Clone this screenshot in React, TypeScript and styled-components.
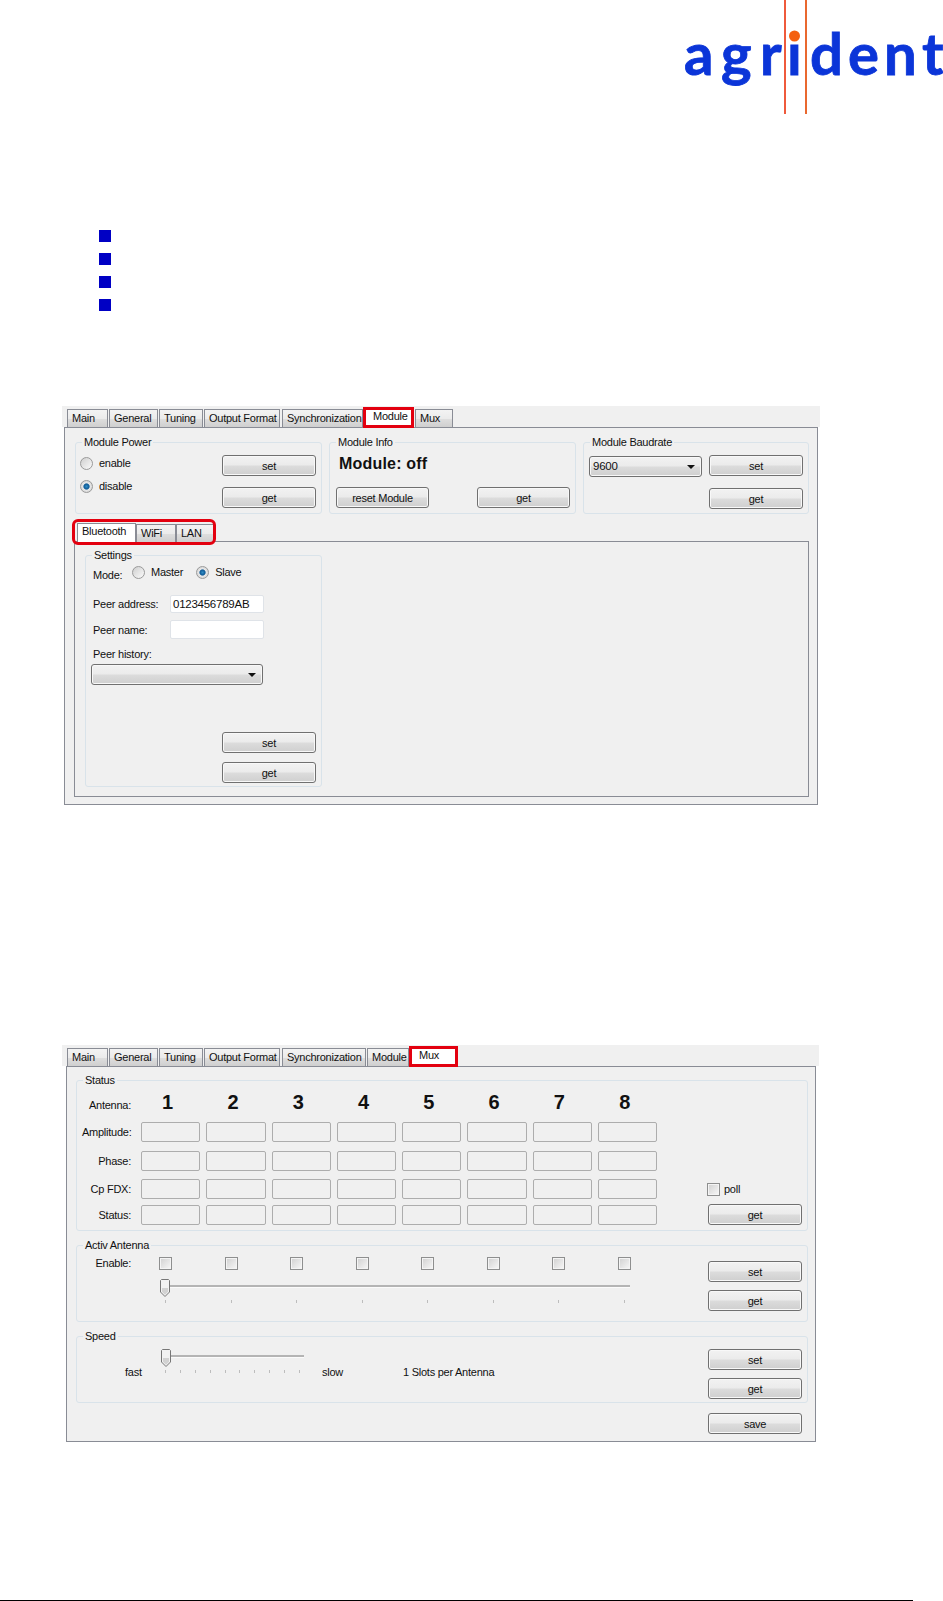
import React from 'react';
import styled, { createGlobalStyle } from 'styled-components';

const GlobalStyle = createGlobalStyle`
  html, body {
    margin: 0;
    padding: 0;
    background: #fff;
    overflow: hidden;
  }
  body {
    font-family: "Liberation Sans", Arial, sans-serif;
    font-size: 11px;
    letter-spacing: -0.25px;
    color: #111;
  }
`;

const Page = styled.div`
  width: 943px;
  height: 1601px;
  display: flex;
  flex-direction: column;
  overflow: hidden;
`;

const LogoSvg = styled.svg`
  display: block;
  flex: none;
`;

const LogoLetter = styled.text`
  font-family: Lato, sans-serif;
  font-weight: 700;
  font-size: 58px;
  letter-spacing: 0;
  fill: #0b35d8;
  stroke: #0b35d8;
  stroke-width: 0.8px;
`;

const BulletList = styled.div`
  margin: 116px 0 0 99px;
  display: flex;
  flex-direction: column;
  gap: 11px;
`;

const Bullet = styled.div`
  width: 12px;
  height: 12px;
  background: #0000c4;
`;

const Window = styled.div<{ $top: number; $width: number }>`
  margin: ${(p) => p.$top}px 0 0 62px;
  width: ${(p) => p.$width}px;
  flex: none;
  display: flex;
  flex-direction: column;
  align-items: flex-start;
`;

const TabStrip = styled.div`
  align-self: stretch;
  height: 21px;
  background: #f0f0f0;
  padding-left: 5px;
  display: flex;
  align-items: flex-end;
  position: relative;
  z-index: 1;
`;

const Tab = styled.div<{ $w: number; $on?: boolean; $marked?: boolean; $gap?: number }>`
  box-sizing: border-box;
  width: ${(p) => p.$w}px;
  margin-left: ${(p) => p.$gap ?? 1}px;
  height: ${(p) => (p.$on ? 21 : 18)}px;
  margin-bottom: ${(p) => (p.$on ? -1 : 0)}px;
  padding: ${(p) => (p.$on ? '1px 0 0 4px' : '2px 0 0 4px')};
  line-height: 13px;
  white-space: nowrap;
  border: 1px solid #898c95;
  border-bottom: none;
  background: linear-gradient(#f3f3f3 0%, #ebebeb 50%, #dddddd 55%, #cfcfcf 100%);
  ${(p) => p.$on && 'background: #fff;'}
  ${(p) => p.$marked && 'border: 3px solid #e3000f; padding: 0 0 0 7px;'}
`;

const TabPanel = styled.div<{ $left: number; $width: number; $height: number }>`
  box-sizing: border-box;
  margin-left: ${(p) => p.$left}px;
  width: ${(p) => p.$width}px;
  height: ${(p) => p.$height}px;
  border: 1px solid #898c95;
  background: #f0f0f0;
  display: flex;
  flex-direction: column;
`;

const WindowFoot = styled.div`
  align-self: stretch;
  height: 2px;
`;

const Group = styled.div<{ $w?: number; $h: number }>`
  box-sizing: border-box;
  position: relative;
  flex: none;
  width: ${(p) => (p.$w ? `${p.$w}px` : 'auto')};
  height: ${(p) => p.$h}px;
  border: 1px solid #d9e3ea;
  border-radius: 3px;
`;

const Legend = styled.span`
  position: absolute;
  left: 6px;
  top: -7px;
  padding: 0 2px;
  background: #f0f0f0;
  line-height: 13px;
  white-space: nowrap;
`;

const Button = styled.div<{ $w?: number }>`
  box-sizing: border-box;
  width: ${(p) => p.$w ?? 94}px;
  height: 21px;
  flex: none;
  border: 1px solid #707070;
  border-radius: 3px;
  background: linear-gradient(#f2f2f2 0%, #ebebeb 48%, #dcdcdc 52%, #cfcfcf 100%);
  box-shadow: inset 0 0 0 1px #f8f8f8;
  text-align: center;
  line-height: 21px;
`;

const Combo = styled(Button)`
  position: relative;
  text-align: left;
  padding-left: 3px;
  line-height: 19px;
  font-size: 11.5px;
  &::after {
    content: '';
    position: absolute;
    right: 6px;
    top: 8px;
    border-left: 4px solid transparent;
    border-right: 4px solid transparent;
    border-top: 4px solid #111;
  }
`;

const RadioDot = styled.span<{ $on?: boolean }>`
  box-sizing: border-box;
  display: block;
  flex: none;
  width: 13px;
  height: 13px;
  border-radius: 50%;
  border: 1px solid #9a9a9a;
  background: ${(p) =>
    p.$on
      ? 'radial-gradient(circle at 50% 50%, #2f8cc4 0, #0f5a96 2.6px, #e8e8e8 3.6px, #c8c8c8 100%)'
      : 'linear-gradient(135deg, #cfcfcf, #fbfbfb)'};
`;

const Radio = styled.label<{ $gap?: number }>`
  display: flex;
  align-items: center;
  gap: ${(p) => p.$gap ?? 6}px;
  line-height: 13px;
`;

const Check = styled.span`
  box-sizing: border-box;
  display: block;
  flex: none;
  width: 13px;
  height: 13px;
  border: 1px solid #8e8f8f;
  box-shadow: inset 0 0 0 1px #f4f4f4;
  background: linear-gradient(135deg, #d0d0d0, #f8f8f8);
`;

/* first window */

const TopRow = styled.div`
  display: flex;
  gap: 7px;
  margin: 14px 0 0 10px;
`;

const PowerBody = styled.div`
  display: flex;
  justify-content: space-between;
  padding: 12px 5px 0 4px;
`;

const ButtonColumn = styled.div<{ $gap?: number }>`
  display: flex;
  flex-direction: column;
  gap: ${(p) => p.$gap ?? 11}px;
`;

const RadioColumn = styled.div`
  display: flex;
  flex-direction: column;
  gap: 10px;
  padding-top: 2px;
`;

const InfoBody = styled.div`
  display: flex;
  flex-direction: column;
  padding: 12px 5px 0 6px;
`;

const ModuleState = styled.div`
  font-size: 16px;
  font-weight: 700;
  letter-spacing: 0.2px;
  line-height: 18px;
  height: 32px;
  padding-left: 3px;
`;

const InfoButtons = styled.div`
  display: flex;
  justify-content: space-between;
`;

const BaudBody = styled.div`
  display: grid;
  grid-template-columns: 113px 94px;
  justify-content: space-between;
  row-gap: 11px;
  padding: 12px 5px 0 5px;
`;

const BaudCombo = styled(Combo)`
  margin-top: 1px;
`;

const BaudGet = styled(Button)`
  grid-column: 2;
`;

const InnerStrip = styled.div`
  position: relative;
  display: flex;
  align-items: flex-end;
  margin: 9px 0 0 9px;
  padding-left: 3px;
  height: 19px;
  z-index: 1;
`;

const InnerTab = styled(Tab)`
  height: ${(p) => (p.$on ? 20 : 18)}px;
`;

const RedOutline = styled.div`
  position: absolute;
  left: -2px;
  top: -4px;
  width: 144px;
  height: 26px;
  box-sizing: border-box;
  border: 3px solid #e3000f;
  border-radius: 6px;
  pointer-events: none;
`;

const InnerPanel = styled.div`
  box-sizing: border-box;
  margin: -1px 0 0 9px;
  width: 735px;
  height: 256px;
  border: 1px solid #898c95;
  padding: 13px 0 0 10px;
`;

const SettingsBody = styled.div`
  display: flex;
  flex-direction: column;
  padding: 10px 5px 0 5px;
  height: 100%;
  box-sizing: border-box;
`;

const ModeRow = styled.div`
  display: flex;
  align-items: flex-start;
  padding-left: 2px;
  height: 29px;
  line-height: 13px;
`;

const ModeLabel = styled.span`
  margin-top: 3px;
  width: 39px;
`;

const SlaveRadio = styled(Radio)`
  margin-left: 13px;
`;

const FieldRow = styled.div`
  display: grid;
  grid-template-columns: 77px 94px;
  align-items: center;
  padding-left: 2px;
  margin-bottom: 7px;
`;

const TextInput = styled.div<{ $h: number }>`
  box-sizing: border-box;
  height: ${(p) => p.$h}px;
  border: 1px solid #dfe3e8;
  border-radius: 2px;
  background: #fff;
  padding-left: 2px;
  font-size: 11.5px;
  line-height: 16px;
`;

const PeerHistory = styled.div`
  padding-left: 2px;
  line-height: 13px;
  margin: 2px 0 3px;
`;

const SettingsButtons = styled(ButtonColumn)`
  margin: 47px 0 0 auto;
`;

/* second window */

const MuxGroups = styled.div`
  display: flex;
  flex-direction: column;
  gap: 14px;
  padding: 13px 7px 0 9px;
`;

const StatusBody = styled.div`
  display: flex;
  justify-content: space-between;
  padding: 12px 5px 0 5px;
`;

const AntennaGrid = styled.div`
  display: grid;
  grid-template-columns: 53px repeat(8, 59.3px);
  grid-template-rows: 29px 29px 28px 26px 20px;
  column-gap: 6px;
`;

const RowLabel = styled.div`
  padding-right: 4px;
  height: 20px;
  line-height: 20px;
  text-align: right;
`;

const AntennaLabel = styled(RowLabel)`
  line-height: 25px;
`;

const AntennaNumber = styled.div`
  font-size: 20px;
  font-weight: 700;
  letter-spacing: 0;
  line-height: 18px;
  padding-right: 6px;
  text-align: center;
`;

const ValueBox = styled.div`
  box-sizing: border-box;
  height: 20px;
  border: 1px solid #adadad;
  border-radius: 2px;
`;

const StatusActions = styled.div`
  display: flex;
  flex-direction: column;
  align-items: flex-start;
  justify-content: flex-end;
  gap: 8px;
`;

const PollRow = styled.label`
  display: flex;
  align-items: center;
  gap: 4px;
  margin-left: -1px;
  line-height: 13px;
`;

const ActivBody = styled.div`
  display: flex;
  justify-content: space-between;
  padding: 11px 5px 0 5px;
`;

const ActivGrid = styled.div`
  display: grid;
  grid-template-columns: 49px 472px;
  column-gap: 28px;
  align-items: start;
  align-content: start;
`;

const EvenRow = styled.div`
  display: flex;
  justify-content: space-between;
`;

const EnableLabel = styled(RowLabel)`
  padding-right: 0;
  height: 13px;
  line-height: 13px;
`;

const ActivButtons = styled(ButtonColumn)`
  margin-top: 4px;
  gap: 8px;
`;

const SliderBox = styled.div<{ $w: number; $ml: number }>`
  position: relative;
  width: ${(p) => p.$w}px;
  margin-left: ${(p) => p.$ml}px;
  height: 18px;
`;

const SliderRail = styled.div`
  position: absolute;
  left: 4px;
  right: 0;
  top: 6px;
  height: 2px;
  background: #b4b4b4;
  border-bottom: 1px solid #fbfbfb;
`;

const SliderThumb = styled.svg`
  position: absolute;
  left: 0;
  top: 0;
`;

const TickRow = styled.div<{ $pad: number }>`
  display: flex;
  justify-content: space-between;
  padding: 0 ${(p) => p.$pad}px;
`;

const Tick = styled.span`
  width: 1px;
  height: 3px;
  background: #bdbdbd;
`;

const ActivSlider = styled.div`
  grid-column: 2;
  padding-top: 9px;
`;

const ActivTicks = styled(TickRow)`
  margin-top: 3px;
`;

const SpeedBody = styled.div`
  display: flex;
  justify-content: space-between;
  padding: 12px 5px 0 48px;
`;

const SpeedControls = styled.div`
  display: flex;
  align-items: flex-start;
`;

const SpeedText = styled.span<{ $ml?: number; $w?: number }>`
  margin-left: ${(p) => p.$ml ?? 0}px;
  width: ${(p) => (p.$w ? `${p.$w}px` : 'auto')};
  margin-top: 17px;
  line-height: 13px;
  white-space: nowrap;
`;

const SpeedTicks = styled(TickRow)`
  margin-top: 3px;
`;

const SpeedSlider = styled.div`
  width: 143px;
`;

const SpeedButtons = styled(ButtonColumn)`
  gap: 8px;
`;

const SaveRow = styled.div`
  display: flex;
  justify-content: flex-end;
  margin-top: -4px;
  padding-right: 6px;
`;

const BottomRule = styled.div`
  margin-top: auto;
  width: 913px;
  height: 1px;
  background: #000;
  flex: none;
`;

const Thumb = () => (
  <SliderThumb width="10" height="18" viewBox="0 0 10 18">
    <path d="M1.5 .5h7l1 1v11.5l-4.5 4.5-4.5-4.5V1.5z" fill="#f2f2f2" stroke="#777" />
    <path d="M2 9h6v3.8l-3 3-3-3z" fill="#d2d2d2" />
  </SliderThumb>
);

const Logo = () => (
  <LogoSvg width="943" height="114" viewBox="0 0 943 114">
    <LogoLetter x="684" y="75">a</LogoLetter>
    <LogoLetter x="721" y="75">g</LogoLetter>
    <LogoLetter x="760" y="75">r</LogoLetter>
    <LogoLetter x="787" y="75">ı</LogoLetter>
    <LogoLetter x="810" y="75">d</LogoLetter>
    <LogoLetter x="848" y="75">e</LogoLetter>
    <LogoLetter x="884" y="75">n</LogoLetter>
    <LogoLetter x="922" y="75">t</LogoLetter>
    <rect x="784" y="0" width="2" height="114" fill="#ef5a3c" />
    <rect x="805" y="0" width="2" height="114" fill="#e9682f" />
    <circle cx="794.5" cy="36" r="5.5" fill="#f4600f" />
  </LogoSvg>
);

const tabsFirst = [
  { name: 'Main', w: 41, gap: 0 },
  { name: 'General', w: 49 },
  { name: 'Tuning', w: 44 },
  { name: 'Output Format', w: 76 },
  { name: 'Synchronization', w: 81, gap: 2 },
  { name: 'Module', w: 51, on: true, marked: true, gap: 0 },
  { name: 'Mux', w: 38, gap: 1 },
];

const tabsSecond = [
  { name: 'Main', w: 41, gap: 0 },
  { name: 'General', w: 49 },
  { name: 'Tuning', w: 44 },
  { name: 'Output Format', w: 76 },
  { name: 'Synchronization', w: 84, gap: 2 },
  { name: 'Module', w: 42 },
  { name: 'Mux', w: 49, on: true, marked: true, gap: 0 },
];

const antennas = [1, 2, 3, 4, 5, 6, 7, 8];
const rows = ['Amplitude:', 'Phase:', 'Cp FDX:', 'Status:'];

const Tabs = ({ items }: { items: typeof tabsSecond }) => (
  <TabStrip>
    {items.map((t) => (
      <Tab key={t.name} $w={t.w} $gap={t.gap} $on={t.on} $marked={t.marked}>
        {t.name}
      </Tab>
    ))}
  </TabStrip>
);

export default function App() {
  return (
    <Page>
      <GlobalStyle />
      <Logo />
      <BulletList>
        <Bullet />
        <Bullet />
        <Bullet />
        <Bullet />
      </BulletList>

      <Window $top={95} $width={758}>
        <Tabs items={tabsFirst} />
        <TabPanel $left={2} $width={754} $height={378}>
          <TopRow>
            <Group $w={247} $h={72}>
              <Legend>Module Power</Legend>
              <PowerBody>
                <RadioColumn>
                  <Radio>
                    <RadioDot />
                    enable
                  </Radio>
                  <Radio>
                    <RadioDot $on />
                    disable
                  </Radio>
                </RadioColumn>
                <ButtonColumn>
                  <Button>set</Button>
                  <Button>get</Button>
                </ButtonColumn>
              </PowerBody>
            </Group>
            <Group $w={247} $h={72}>
              <Legend>Module Info</Legend>
              <InfoBody>
                <ModuleState>Module: off</ModuleState>
                <InfoButtons>
                  <Button $w={93}>reset Module</Button>
                  <Button $w={93}>get</Button>
                </InfoButtons>
              </InfoBody>
            </Group>
            <Group $w={226} $h={72}>
              <Legend>Module Baudrate</Legend>
              <BaudBody>
                <BaudCombo $w={113}>9600</BaudCombo>
                <Button>set</Button>
                <BaudGet>get</BaudGet>
              </BaudBody>
            </Group>
          </TopRow>

          <InnerStrip>
            <InnerTab $w={59} $gap={0} $on>
              Bluetooth
            </InnerTab>
            <InnerTab $w={40} $gap={0}>
              WiFi
            </InnerTab>
            <InnerTab $w={39} $gap={0}>
              LAN
            </InnerTab>
            <RedOutline />
          </InnerStrip>
          <InnerPanel>
            <Group $w={237} $h={232}>
              <Legend>Settings</Legend>
              <SettingsBody>
                <ModeRow>
                  <ModeLabel>Mode:</ModeLabel>
                  <Radio>
                    <RadioDot />
                    Master
                  </Radio>
                  <SlaveRadio>
                    <RadioDot $on />
                    Slave
                  </SlaveRadio>
                </ModeRow>
                <FieldRow>
                  <span>Peer address:</span>
                  <TextInput $h={18}>0123456789AB</TextInput>
                </FieldRow>
                <FieldRow>
                  <span>Peer name:</span>
                  <TextInput $h={19} />
                </FieldRow>
                <PeerHistory>Peer history:</PeerHistory>
                <Combo $w={172} />
                <SettingsButtons $gap={9}>
                  <Button>set</Button>
                  <Button>get</Button>
                </SettingsButtons>
              </SettingsBody>
            </Group>
          </InnerPanel>
        </TabPanel>
        <WindowFoot />
      </Window>

      <Window $top={238} $width={757}>
        <Tabs items={tabsSecond} />
        <TabPanel $left={4} $width={750} $height={376}>
          <MuxGroups>
            <Group $h={151}>
              <Legend>Status</Legend>
              <StatusBody>
                <AntennaGrid>
                  <AntennaLabel>Antenna:</AntennaLabel>
                  {antennas.map((n) => (
                    <AntennaNumber key={n}>{n}</AntennaNumber>
                  ))}
                  {rows.map((label) => (
                    <React.Fragment key={label}>
                      <RowLabel>{label}</RowLabel>
                      {antennas.map((n) => (
                        <ValueBox key={n} />
                      ))}
                    </React.Fragment>
                  ))}
                </AntennaGrid>
                <StatusActions>
                  <PollRow>
                    <Check />
                    poll
                  </PollRow>
                  <Button>get</Button>
                </StatusActions>
              </StatusBody>
            </Group>

            <Group $h={77}>
              <Legend>Activ Antenna</Legend>
              <ActivBody>
                <ActivGrid>
                  <EnableLabel>Enable:</EnableLabel>
                  <EvenRow>
                    {antennas.map((n) => (
                      <Check key={n} />
                    ))}
                  </EvenRow>
                  <ActivSlider>
                    <SliderBox $w={470} $ml={1}>
                      <SliderRail />
                      <Thumb />
                    </SliderBox>
                    <ActivTicks $pad={6}>
                      {antennas.map((n) => (
                        <Tick key={n} />
                      ))}
                    </ActivTicks>
                  </ActivSlider>
                </ActivGrid>
                <ActivButtons>
                  <Button>set</Button>
                  <Button>get</Button>
                </ActivButtons>
              </ActivBody>
            </Group>

            <Group $h={67}>
              <Legend>Speed</Legend>
              <SpeedBody>
                <SpeedControls>
                  <SpeedText $w={36}>fast</SpeedText>
                  <SpeedSlider>
                    <SliderBox $w={143} $ml={0}>
                      <SliderRail />
                      <Thumb />
                    </SliderBox>
                    <SpeedTicks $pad={4}>
                      {Array.from({ length: 10 }, (_, i) => (
                        <Tick key={i} />
                      ))}
                    </SpeedTicks>
                  </SpeedSlider>
                  <SpeedText $ml={18} $w={81}>
                    slow
                  </SpeedText>
                  <SpeedText>1 Slots per Antenna</SpeedText>
                </SpeedControls>
                <SpeedButtons>
                  <Button>set</Button>
                  <Button>get</Button>
                </SpeedButtons>
              </SpeedBody>
            </Group>
            <SaveRow>
              <Button>save</Button>
            </SaveRow>
          </MuxGroups>
        </TabPanel>
      </Window>

      <BottomRule />
    </Page>
  );
}
